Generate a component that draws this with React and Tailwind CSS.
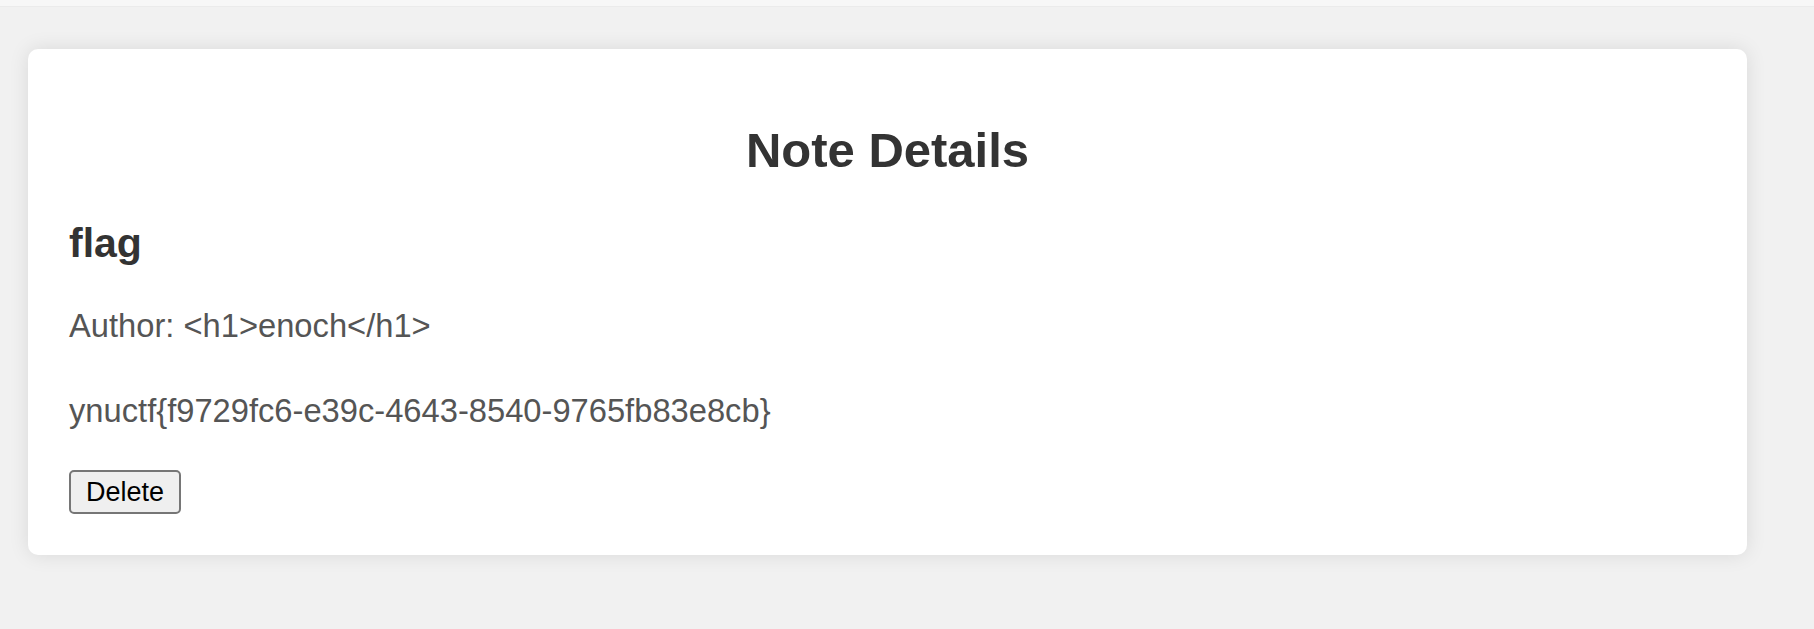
export default function App() {
  return (
    <div className="min-h-[629px] bg-[#f1f1f1] font-['Liberation_Sans',Arial,sans-serif]">
      <div className="h-[7px] bg-[#f7f7f7] border-b border-[#ebebeb]" />
      <div className="pl-[28px] pt-[42px]">
        <div className="w-[1719px] rounded-[10px] bg-white shadow-[0_0_20px_rgba(0,0,0,0.1)] px-[41px] pt-[73px] pb-[41px]">
          <h2 className="text-center text-[49px] leading-[56px] font-bold text-[#333]">Note Details</h2>
          <h3 className="mt-[42px] text-[41px] leading-[47px] font-bold text-[#333]">flag</h3>
          <p className="mt-[40px] text-[32.7px] leading-[38px] text-[#555]">Author: &lt;h1&gt;enoch&lt;/h1&gt;</p>
          <p className="mt-[47px] text-[32.7px] leading-[38px] text-[#555]">ynuctf{"{"}f9729fc6-e39c-4643-8540-9765fb83e8cb{"}"}</p>
          <button className="mt-[40px] h-[44px] w-[112px] rounded-[5px] border-2 border-[#767676] bg-[#efefef] text-[27px] leading-none text-black">
            Delete
          </button>
        </div>
      </div>
    </div>
  );
}
